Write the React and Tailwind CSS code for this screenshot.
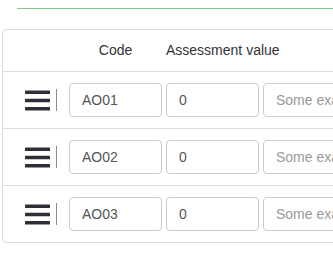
export default function App() {
  const rows = ['AO01', 'AO02', 'AO03']

  return (
    <div className="w-[333px] h-[253px] overflow-hidden bg-white font-['Liberation_Sans',Arial,sans-serif] text-[14px]">
      <div className="ml-[17px] mt-[8px] h-px bg-[#8fc18f]" />

      <div className="ml-[2px] mt-[20px] w-[420px] border border-[#ddd] rounded-[4px]">
        <div className="flex items-center h-[42px] border-b border-[#ddd] text-[#333]">
          <div className="w-[66px] shrink-0" />
          <div className="w-[93px] shrink-0 text-center">Code</div>
          <div className="ml-[4px]">Assessment value</div>
        </div>

        {rows.map((code, i) => (
          <div
            key={code}
            className={`flex items-center h-[56px] ${i < rows.length - 1 ? 'border-b border-[#ddd] h-[57px]' : ''}`}
          >
            <svg className="ml-[22px] shrink-0" width="25" height="21" viewBox="0 0 25 21">
              <rect x="0" y="0.5" width="25" height="3.5" rx="0.6" fill="#2f2f3a" />
              <rect x="0" y="8.8" width="25" height="3.5" rx="0.6" fill="#2f2f3a" />
              <rect x="0" y="17.1" width="25" height="3.5" rx="0.6" fill="#2f2f3a" />
            </svg>
            <div className="ml-[6px] mr-[12px] w-px h-[22px] bg-[#8a8a8a] shrink-0" />
            <div className="flex gap-[4px]">
              <input
                readOnly
                value={code}
                className="w-[93px] h-[34px] px-[12px] border border-[#ccc] rounded-[4px] text-[#555] outline-none"
              />
              <input
                readOnly
                value="0"
                className="w-[93px] h-[34px] px-[12px] border border-[#ccc] rounded-[4px] text-[#555] outline-none"
              />
              <input
                readOnly
                placeholder="Some example text"
                className="w-[160px] h-[34px] px-[12px] border border-[#ccc] rounded-[4px] text-[#555] placeholder:text-[#999] outline-none"
              />
            </div>
          </div>
        ))}
      </div>
    </div>
  )
}
